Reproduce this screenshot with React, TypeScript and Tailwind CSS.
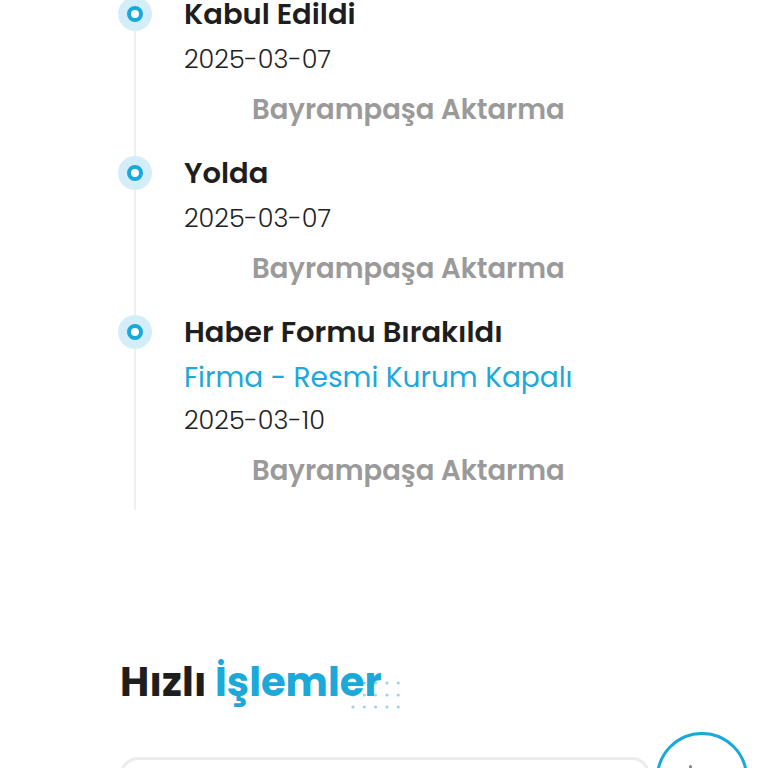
import React from "react";

type Step = {
  title: string;
  note?: string;
  date: string;
  place: string;
};

const steps: Step[] = [
  { title: "Kabul Edildi", date: "2025-03-07", place: "Bayrampaşa Aktarma" },
  { title: "Yolda", date: "2025-03-07", place: "Bayrampaşa Aktarma" },
  {
    title: "Haber Formu Bırakıldı",
    note: "Firma - Resmi Kurum Kapalı",
    date: "2025-03-10",
    place: "Bayrampaşa Aktarma",
  },
];

const Dot = () => (
  <div className="w-[34px] h-[34px] rounded-full bg-[#d3eef8] flex items-center justify-center">
    <div className="w-[16px] h-[16px] rounded-full border-[4px] border-[#17a9db] bg-white" />
  </div>
);

const Dots = () => (
  <svg width="56" height="34" viewBox="0 0 56 34" className="absolute left-[229px] top-[20px]">
    {[0, 1, 2].map((r) =>
      [0, 1, 2, 3, 4].map((c) => (
        <circle key={`${r}-${c}`} cx={4 + c * 11.3} cy={4 + r * 12} r="1.6" fill="#97d6ee" />
      ))
    )}
  </svg>
);

export default function App() {
  return (
    <div
      className="w-[768px] h-[768px] overflow-hidden bg-white"
      style={{ fontFamily: "Poppins, 'Open Sans', 'Noto Sans', sans-serif" }}
    >
      <div className="relative ml-[118px] mt-[-3px]">
        <div className="absolute left-[16px] top-0 h-[513px] w-[2px] bg-[#eef0f2]" />
        <div className="relative flex flex-col gap-[30px]">
          {steps.map((s, i) => (
            <div key={i} className="flex gap-[32px]">
              <div className="shrink-0 pt-[0px]">
                <Dot />
              </div>
              <div className="flex flex-col pt-[1px]">
                <div className="text-[29px] leading-[32px] font-semibold text-[#1e1e1e] whitespace-nowrap">{s.title}</div>
                {s.note && (
                  <div className="mt-[14px] text-[28px] leading-[32px] text-[#1aa9d9] whitespace-nowrap">{s.note}</div>
                )}
                <div className={`${s.note ? "mt-[10px]" : "mt-[13px]"} text-[25.5px] leading-[32px] font-light text-[#222]`}>
                  {s.date}
                </div>
                <div className="mt-[19px] pl-[68px] text-[27.5px] leading-[32px] font-semibold text-[#9a9a9a] whitespace-nowrap">
                  {s.place}
                </div>
              </div>
            </div>
          ))}
        </div>
      </div>

      <div className="ml-[120px] mt-[172px] relative">
        <div className="text-[40px] leading-[46px] font-bold text-[#1e1e1e] relative z-10">
          Hızlı <span className="text-[#1aa9d9]">İşlemler</span>
        </div>
        <Dots />
      </div>

      <div className="ml-[120px] mt-[27px] flex items-start gap-[6px]">
        <div className="w-[530px] h-[60px] mt-[25px] rounded-[18px] border-[3px] border-[#ececec] bg-white" />
        <div className="w-[92px] h-[92px] rounded-full border-[3px] border-[#17a9db] bg-white flex items-start justify-start pl-[30px] pt-[30px]">
          <div className="w-[3px] h-[8px] rounded-full bg-[#888]" />
        </div>
      </div>
    </div>
  );
}
